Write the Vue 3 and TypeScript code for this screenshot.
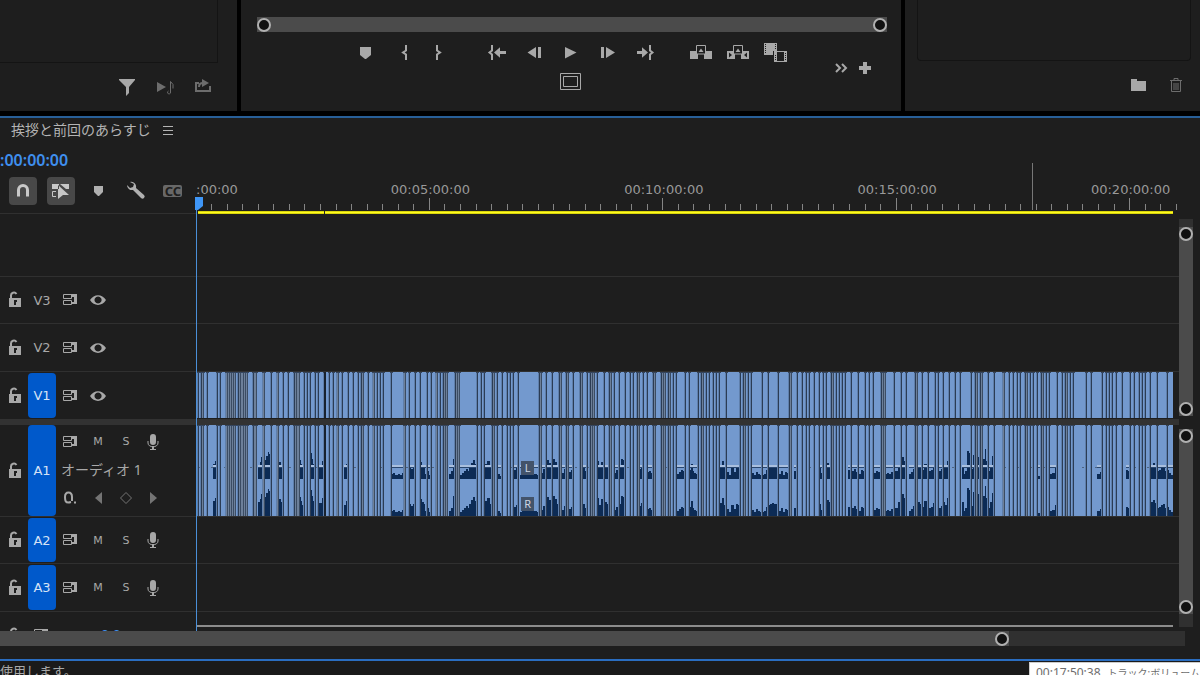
<script setup lang="ts">
import { h } from 'vue'

interface Glyph {
  w: number
  h: number
  fill?: string
  line?: string
  lw?: number
}

const glyphs: Record<string, Glyph> = {
  marker: { w: 37, h: 24, fill: 'M13 7h11v8l-5 4h-1l-5-4z' },
  markIn: { w: 37, h: 24, line: 'M22 5v5.5l-3 2l3 2V20', lw: 2 },
  markOut: { w: 37, h: 24, line: 'M16 5v5.5l3 2l-3 2V20', lw: 2 },
  goIn: { w: 37, h: 24, line: 'M14 5v5.5l-2.5 2l2.5 2V20', lw: 2, fill: 'M16 12.5l6-5.2v3.7h6v3h-6v3.7z' },
  stepBack: { w: 37, h: 24, fill: 'M12.5 12.5l8.5-5.5v11zM23 7h3v11h-3z' },
  play: { w: 37, h: 24, fill: 'M13 7l11.5 5.5L13 18.500z' },
  stepNext: { w: 37, h: 24, fill: 'M12 7h3v11h-3zM17 7l9 5.500l-9 5.500z' },
  goOut: { w: 37, h: 24, line: 'M24 5v5.500l2.500 2l-2.500 2V20', lw: 2, fill: 'M22 12.500l-6-5.200v3.700h-5v3h5v3.700z' },
  lift: { w: 37, h: 24, line: 'M13.5 12V5.500h9V14h-9z', lw: 1, fill: 'M7 11h6v3h2v5H7zM23 11h6v8h-8v-5h2zM15.500 12l2.500-3.500l2.500 3.500z' },
  extract: { w: 37, h: 24, line: 'M13.500 12V5.500h9V14h-9z', lw: 1, fill: 'M7 11h6v3h2v5H7zM9 12.500v5l3-2.500zM23 11h6v8h-8v-5h2zM27 12.500v5l-3-2.500zM15.500 12l2.500-3.500l2.500 3.500z' },
  exportFrame: { w: 37, h: 24, fill: 'M7 3h13v8h-4v4H7zM8 4v1h1V4zM8 6v1h1V6zM8 8v1h1V8zM8 10v1h1v-1zM8 12v1h1v-1zM18 4v1h1V4zM18 6v1h1V6zM18 8v1h1V8zM17 11h13v11H17zM20 12v9h7v-9zM28 13v1h1v-1zM28 15v1h1v-1zM28 17v1h1v-1zM28 19v1h1v-1zM18 15v1h1v-1zM18 17v1h1v-1zM18 19v1h1v-1z' },
  frame: { w: 24, h: 18, line: 'M1.500 .5h20v16h-20zM4.500 3.500h14v10h-14z', lw: 1 },
  more: { w: 24, h: 24, line: 'M7 8l4 4l-4 4M13 8l4 4l-4 4', lw: 2 },
  plus: { w: 24, h: 24, fill: 'M10 6h4v4h4v4h-4v4h-4v-4H6v-4h4z' },
  funnel: { w: 38, h: 26, fill: 'M11 5h16v1l-6 7v6l-3 3v-9l-7-7z' },
  playAudio: { w: 38, h: 26, fill: 'M11 8l9 5l-9 5z', line: 'M24.500 18V7.500l2.500 3v4M24.500 18a1.500 1.500 0 1 1-2-1', lw: 1 },
  share: { w: 38, h: 26, fill: 'M18 5l7 4l-7 4z', line: 'M15 9h-3v8h14v-5M15 13c0-3 1-4 4-4', lw: 2 },
  folder: { w: 38, h: 26, fill: 'M12 5h6v2h9v10H12z' },
  trash: { w: 38, h: 26, line: 'M13 6.500h12M17 6V4.500h4V6M14.500 7v10.500h9V7M17 9v7M19 9v7M21 9v7', lw: 1 },
  menu: { w: 12, h: 12, line: 'M1 2.500h10M1 6.500h10M1 10.500h10', lw: 1 },
  magnet: { w: 28, h: 28, line: 'M9.500 19.500V13a4.500 4.500 0 0 1 9 0v6.500', lw: 3 },
  linked: { w: 28, h: 28, fill: 'M5 7h7v5H5zM13 7h9v5h-3l-6-5zM11 8l11 10h-6l-5 4z', line: 'M9 14.500H5.500v5H9', lw: 1 },
  flag: { w: 28, h: 28, fill: 'M9 9h9v6l-4 4h-1l-4-4z' },
  wrench: { w: 28, h: 28, fill: 'M7 5a5 5 0 0 1 6 6l8 7a2 2 0 0 1-3 3l-8-8a5 5 0 0 1-6-5l3 3l3-1l1-3z' },
  captions: { w: 24, h: 28, fill: 'M4 8h15a2 2 0 0 1 2 2v8a2 2 0 0 1-2 2H4a2 2 0 0 1-2-2v-8a2 2 0 0 1 2-2z' },
  lock: { w: 14, h: 18, fill: 'M1 7h12v9H1zM6 9v2h0v3h2v-3h1V9z', line: 'M3 7V5a3 3 0 0 1 5.500-2', lw: 2 },
  sync: { w: 16, h: 16, line: 'M1.500 2.500h8v4h-8zM1.500 8.500h8v4h-8z', lw: 1, fill: 'M9 2h6v10H9v-2h3V5H9z' },
  eye: { w: 16, h: 12, fill: 'M0 6C4-.5 12-.5 16 6C12 12.500 4 12.500 0 6zM8 2.500a3.500 3.500 0 1 0 .1 0z' },
  mic: { w: 16, h: 18, fill: 'M7 1a3 3 0 0 1 3 3v5a3 3 0 0 1-6 0V4a3 3 0 0 1 3-3zM6 13h2v3h2v1H4v-1h2z', line: 'M2 8v2c0 5 10 5 10 0V8', lw: 1 },
  keyframe: { w: 16, h: 16, line: 'M9 12C3 14 3 10 3 7C3 1 10 1 10 7v4M12 12.500h2', lw: 2 },
  prev: { w: 16, h: 16, fill: 'M12 2v12L5 8z' },
  diamond: { w: 16, h: 16, line: 'M8 2.500L13.500 8L8 13.500L2.500 8z', lw: 1 },
  next: { w: 16, h: 16, fill: 'M4 2v12l7-6z' },
}

function Icon(props: { name: string }) {
  const g = glyphs[props.name]
  return h(
    'svg',
    { width: g.w, height: g.h, viewBox: `0 0 ${g.w} ${g.h}`, 'aria-hidden': 'true' },
    [
      g.fill ? h('path', { d: g.fill, fill: 'currentColor', 'fill-rule': 'evenodd' }) : null,
      g.line ? h('path', { d: g.line, fill: 'none', stroke: 'currentColor', 'stroke-width': g.lw }) : null,
    ],
  )
}
Icon.props = ['name']

const transport: [string, string][][] = [
  [['marker', 'マーカーを追加'], ['markIn', 'インをマーク'], ['markOut', 'アウトをマーク']],
  [['goIn', 'インへ移動'], ['stepBack', '前のフレーム'], ['play', '再生'], ['stepNext', '次のフレーム'], ['goOut', 'アウトへ移動']],
  [['lift', 'リフト'], ['extract', '抽出'], ['exportFrame', 'フレームを書き出し']],
]

const tools = [
  { icon: 'magnet', label: 'スナップ', on: true },
  { icon: 'linked', label: 'リンクされた選択', on: true },
  { icon: 'flag', label: 'マーカー', on: false },
  { icon: 'wrench', label: 'タイムライン表示設定', on: false },
]

/* Sequence canvas: SPAN units wide, clips fill the first CLIP_END units after the playhead. */
const SPAN = 983
const STEP = 233.4
const ticks = Array.from({ length: 64 }, (_, i) => ({
  x: Math.floor((i * STEP) / 15),
  major: i % 15 === 0,
}))
const labels = ['00:05:00:00', '00:10:00:00', '00:15:00:00', '00:20:00:00'].map((text, i) => ({
  text,
  left: `${(((i + 1) * STEP + 1) / SPAN) * 100}%`,
}))

const CLIP_END = 976
const cuts = [
  1, 4, 6, 10, 20, 23, 29, 30, 32, 34, 36, 38, 41, 43, 45, 46, 48, 50, 56, 58, 59, 66, 67, 74, 80, 81, 86, 91, 97, 99,
  101, 102, 107, 110, 113, 118, 121, 127, 132, 136, 140, 141, 145, 151, 156, 161, 164, 166, 171, 176, 177, 180, 183,
  186, 194, 207, 208, 212, 218, 223, 230, 234, 239, 240, 243, 246, 248, 250, 258, 260, 262, 280, 284, 287, 295, 297,
  300, 305, 310, 313, 316, 321, 342, 344, 349, 355, 362, 364, 369, 371, 376, 383, 385, 390, 393, 395, 397, 400, 407,
  412, 414, 417, 422, 428, 433, 436, 440, 442, 446, 450, 456, 458, 464, 466, 468, 471, 473, 476, 479, 488, 492, 501,
  504, 506, 509, 512, 516, 519, 522, 529, 543, 546, 548, 551, 554, 565, 571, 581, 592, 594, 600, 605, 609, 612, 617,
  622, 626, 629, 634, 636, 639, 642, 645, 648, 654, 661, 668, 672, 676, 684, 686, 688, 697, 704, 709, 718, 720, 725,
  731, 738, 741, 746, 752, 758, 763, 774, 778, 780, 783, 785, 791, 797, 806, 807, 812, 816, 820, 823, 828, 830, 833,
  836, 840, 844, 846, 849, 852, 860, 865, 868, 870, 873, 876, 889, 894, 905, 909, 912, 915, 919, 925, 933, 937, 942,
  945, 948, 953, 960, 970,
]
const cutLines = cuts.map((x, i) => ({
  x,
  tight: i > 0 && x - cuts[i - 1] <= 2,
}))

/* Each burst: start, end, peak heights spread evenly between them. */
const bursts: [number, number, number[]][] = [
  [16, 20, [15, 18]], [61, 66, [14, 17, 22]], [67, 74, [19, 23, 27, 25]], [82, 86, [17, 14]], [102, 107, [19, 15, 11]],
  [113, 118, [26, 20, 15]], [122, 127, [13, 18]], [147, 151, [11, 15]], [194, 207, [5, 6, 4, 5, 4, 6]],
  [212, 218, [12, 10, 12]], [223, 234, [17, 14, 12, 5, 8, 4]], [252, 258, [5, 8, 20]],
  [263, 280, [4, 6, 8, 10, 8, 12, 16, 19, 15]], [288, 295, [15, 18, 12]], [301, 305, [5, 3]], [316, 321, [9, 11]],
  [323, 342, [4, 6, 9, 8, 10, 6, 5, 4]], [344, 362, [6, 10, 12, 19, 16, 25, 20, 17, 12]], [364, 369, [6, 10]],
  [371, 376, [7, 9]], [385, 390, [12, 8]], [400, 412, [18, 11, 17, 13, 14, 12]], [417, 428, [6, 9, 7, 12, 20, 19]],
  [441, 446, [10, 13]], [450, 456, [7, 8, 6]], [480, 488, [5, 7, 9, 8]], [492, 501, [9, 15, 8, 6, 5]],
  [523, 529, [13, 18, 11]], [530, 543, [7, 4, 11, 7, 12, 11]], [555, 565, [6, 4, 7, 5, 4]],
  [565, 592, [4, 5, 9, 11, 12, 13, 12, 11, 5, 8, 4, 7, 6]], [597, 600, [8]], [622, 626, [12, 6]],
  [628, 634, [12, 16, 14]], [651, 668, [9, 8, 8, 10, 7, 7, 5, 9, 8]], [676, 684, [6, 8, 7]],
  [688, 709, [5, 6, 5, 7, 6, 8, 14, 12, 22, 18]], [712, 718, [5, 7, 10]], [721, 738, [14, 12, 9, 15, 18, 8, 9, 13]],
  [742, 752, [8, 10, 14, 11, 18]], [765, 778, [14, 5, 8, 28, 26, 30, 10, 24]],
  [780, 797, [22, 13, 12, 20, 30, 18, 8, 14, 23]], [841, 845, [3, 3]], [853, 860, [5, 6, 11]], [900, 905, [5, 7]],
  [929, 933, [9, 8]], [954, 976, [14, 16, 13, 8, 9, 11, 12, 8, 9, 6, 4]],
]
function wave(base: number, gain: number): string {
  return bursts
    .map(([from, to, peaks]) => {
      const step = (to - from) / peaks.length
      return `M${from} ${base}` + peaks.map((p) => `V${base - p * gain}h${step}`).join('') + `V${base}z`
    })
    .join('')
}
const leftWave = wave(54, 1)
const rightWave = wave(91, 1)
const volume = bursts.map(([a, b]) => `M${a} 0H${b}`).join('')
</script>

<template>
  <div class="app">
    <div class="upper">
      <section class="panel side">
        <div class="well left-well"></div>
        <div class="panel-tools left-tools">
          <button class="bright" aria-label="フィルター"><Icon name="funnel" /></button>
          <button aria-label="オーディオ再生"><Icon name="playAudio" /></button>
          <button aria-label="書き出し"><Icon name="share" /></button>
        </div>
      </section>

      <section class="panel monitor">
        <div class="zoombar">
          <button class="knob" aria-label="表示範囲の開始"></button>
          <button class="knob" aria-label="表示範囲の終了"></button>
        </div>
        <div class="controls">
          <div class="center-controls">
            <div class="transport">
              <div v-for="(group, i) in transport" :key="i" class="group">
                <button v-for="[icon, label] in group" :key="icon" :aria-label="label"><Icon :name="icon" /></button>
              </div>
            </div>
            <button class="frame" aria-label="セーフマージン"><Icon name="frame" /></button>
          </div>
          <div class="extra">
            <button aria-label="その他"><Icon name="more" /></button>
            <button aria-label="ボタンエディター"><Icon name="plus" /></button>
          </div>
        </div>
      </section>

      <section class="panel side">
        <div class="well right-well"></div>
        <div class="panel-tools right-tools">
          <button class="bright" aria-label="新規フォルダー"><Icon name="folder" /></button>
          <button aria-label="削除"><Icon name="trash" /></button>
        </div>
      </section>
    </div>

    <main class="timeline">
      <header class="tab">
        <span>挨拶と前回のあらすじ</span>
        <button aria-label="パネルメニュー"><Icon name="menu" /></button>
      </header>

      <div class="head">
        <div class="head-left">
          <div class="timecode">:00:00:00</div>
          <div class="tools">
            <button v-for="t in tools" :key="t.icon" :class="{ on: t.on }" :aria-label="t.label"><Icon :name="t.icon" /></button>
            <button class="cc" aria-label="キャプション"><Icon name="captions" /><b>CC</b></button>
          </div>
        </div>
        <div class="ruler">
          <span class="time first">:00:00</span>
          <span v-for="l in labels" :key="l.text" class="time" :style="{ left: l.left }">{{ l.text }}</span>
          <svg class="scale" :viewBox="`0 0 ${SPAN} 54`" preserveAspectRatio="none" shape-rendering="crispEdges">
            <rect v-for="t in ticks" :key="t.x" :x="t.x" :y="t.major ? 38 : 44" width="1" :height="t.major ? 12 : 6" fill="#858585" />
            <rect x="836" y="3" width="1" height="47" fill="#777" />
            <rect x="2" y="51" width="975" height="3" fill="#d9d50c" />
            <rect x="2" y="52" width="975" height="1" fill="#fffb20" />
            <rect x="128" y="51" width="1" height="3" fill="#222" />
          </svg>
        </div>
      </div>

      <div class="body">
        <div class="tracks">
          <div class="row blank"><div class="label"></div><div class="lane"></div></div>
          <div v-for="v in ['V3', 'V2', 'V1']" :key="v" class="row video" :class="v.toLowerCase()">
            <div class="label">
              <button class="lock" aria-label="ロック"><Icon name="lock" /></button>
              <button class="target" :class="{ active: v === 'V1' }">{{ v }}</button>
              <div class="switches">
                <button aria-label="同期ロック"><Icon name="sync" /></button>
                <button aria-label="トラック出力"><Icon name="eye" /></button>
              </div>
            </div>
            <div class="lane">
              <svg v-if="v === 'V1'" class="clips" :viewBox="`0 0 ${CLIP_END} 46`" preserveAspectRatio="none" shape-rendering="crispEdges">
                <rect :width="CLIP_END" height="46" fill="#7399ce" />
                <g v-for="c in cutLines" :key="c.x">
                  <rect :x="c.x - 1" y="0" :width="c.tight ? 1 : 2" height="46" :fill="c.tight ? '#6d809a' : '#5f7fab'" />
                  <rect :x="c.x" y="0" width="1" height="46" :fill="c.tight ? '#3b4c63' : '#2b3c54'" />
                  <rect :x="c.x - 1" y="0" width="3" height="1" fill="#35465f" />
                </g>
                <rect x="127" width="2" height="46" fill="#18222f" />
              </svg>
            </div>
          </div>

          <div class="divider"></div>

          <div class="row a1">
            <div class="label">
              <button class="lock" aria-label="ロック"><Icon name="lock" /></button>
              <button class="target active">A1</button>
              <div class="stack">
                <div class="switches">
                  <button aria-label="同期ロック"><Icon name="sync" /></button>
                  <button>M</button>
                  <button>S</button>
                  <button aria-label="ボイスオーバー録音"><Icon name="mic" /></button>
                </div>
                <div class="name">オーディオ 1</div>
                <div class="switches dim">
                  <button class="key" aria-label="キーフレームを表示"><Icon name="keyframe" /></button>
                  <button aria-label="前のキーフレーム"><Icon name="prev" /></button>
                  <button aria-label="キーフレームを追加"><Icon name="diamond" /></button>
                  <button aria-label="次のキーフレーム"><Icon name="next" /></button>
                </div>
              </div>
            </div>
            <div class="lane">
              <div class="audio">
                <svg class="clips" :viewBox="`0 0 ${CLIP_END} 91`" preserveAspectRatio="none" shape-rendering="crispEdges">
                  <rect :width="CLIP_END" height="91" fill="#7399ce" />
                  <path :d="leftWave" fill="#0c2b55" />
                  <path :d="rightWave" fill="#0c2b55" />
                  <path d="M1 42.500H975" stroke="#4d6482" stroke-width="1" stroke-dasharray="2 11" />
                  <path :d="volume" transform="translate(0 41)" stroke="#a9bfde" stroke-width="2" />
                  <path :d="volume" transform="translate(0 42.500)" stroke="#28466f" stroke-width="1" />
                  <g v-for="c in cutLines" :key="c.x">
                    <rect :x="c.x - 1" y="0" width="1" height="91" :fill="c.tight ? '#6d809a' : '#5f7fab'" />
                    <rect :x="c.x" y="0" width="1" height="91" :fill="c.tight ? '#3b4c63' : '#2b3c54'" />
                    <rect :x="c.x - 1" y="0" width="3" height="1" fill="#35465f" />
                  </g>
                  <rect x="127" width="2" height="91" fill="#18222f" />
                </svg>
                <span class="channel ch-l">L</span>
                <span class="channel ch-r">R</span>
              </div>
            </div>
          </div>

          <div v-for="a in ['A2', 'A3']" :key="a" class="row audio-row">
            <div class="label">
              <button class="lock" aria-label="ロック"><Icon name="lock" /></button>
              <button class="target active">{{ a }}</button>
              <div class="switches">
                <button aria-label="同期ロック"><Icon name="sync" /></button>
                <button>M</button>
                <button>S</button>
                <button aria-label="ボイスオーバー録音"><Icon name="mic" /></button>
              </div>
            </div>
            <div class="lane"></div>
          </div>

          <div class="row mix">
            <div class="label">
              <button class="lock" aria-label="ロック"><Icon name="lock" /></button>
              <button class="mix-sync" aria-label="同期ロック"><Icon name="sync" /></button>
              <span class="gain">0.0</span>
            </div>
            <div class="lane"><div class="end-line"></div></div>
          </div>

          <div class="playhead"><svg width="9" height="14" viewBox="0 0 9 14"><path d="M0 0h8v9l-5 4H0z" fill="#3f96f7" /></svg></div>
        </div>

        <div class="vscrolls">
          <div class="vtrack video-scroll">
            <div class="vthumb">
              <button class="knob" aria-label="ビデオ表示の上端"></button>
              <button class="knob" aria-label="ビデオ表示の下端"></button>
            </div>
          </div>
          <div class="vtrack audio-scroll">
            <div class="vthumb">
              <button class="knob" aria-label="オーディオ表示の上端"></button>
              <button class="knob" aria-label="オーディオ表示の下端"></button>
            </div>
          </div>
        </div>
      </div>

      <div class="hscroll">
        <div class="hthumb"><button class="knob" aria-label="タイムライン表示の終了"></button></div>
      </div>
    </main>

    <footer class="status">
      <span>使用します。</span>
      <div class="tooltip"><span>00:17:50:38</span><span class="kana">トラック:ボリューム</span></div>
    </footer>
  </div>
</template>

<style>
body {
  margin: 0;
  background: #000;
}
</style>

<style scoped>
.app {
  height: 100vh;
  display: flex;
  flex-direction: column;
  overflow: hidden;
  color: #a8a8a8;
  font-family: "Noto Sans", "Noto Sans CJK JP", sans-serif;
  font-size: 14px;
}
.app * {
  box-sizing: border-box;
}
button {
  display: flex;
  align-items: center;
  justify-content: center;
  padding: 0;
  border: 0;
  background: none;
  color: inherit;
  font: inherit;
}
.app :deep(svg) {
  display: block;
  flex: none;
}

.upper {
  display: grid;
  grid-template-columns: 237fr 660fr 295fr;
  gap: 4px;
  flex: none;
  margin-bottom: 5px;
}
.panel {
  background: #1e1e1e;
}
.side {
  display: flex;
  flex-direction: column;
}
.well {
  border: 1px solid #141414;
  border-top: 0;
}
.left-well {
  height: 63px;
  margin-right: 19px;
  border-left: 0;
}
.right-well {
  height: 61px;
  margin: 0 9px 0 12px;
  border-radius: 0 0 4px 4px;
}
.panel-tools {
  display: flex;
  justify-content: flex-end;
  color: #6d6d6d;
}
.left-tools {
  padding: 11px 15px 11px 0;
}
.right-tools {
  padding: 13px 5px 11px 0;
}
.bright {
  color: #a8a8a8;
}

.monitor {
  padding: 17px 0 0;
}
.zoombar {
  display: flex;
  justify-content: space-between;
  align-items: center;
  height: 15px;
  margin: 0 14px 0 16px;
  background: #4b4b4b;
}
.knob {
  width: 14px;
  height: 14px;
  flex: none;
  border: 2px solid #b0b0b0;
  border-radius: 50%;
  background: #111;
}
.controls {
  display: grid;
  grid-template-columns: 1fr 448px 1fr;
  padding-top: 8px;
}
.center-controls {
  grid-column: 2;
  display: flex;
  flex-direction: column;
  align-items: center;
  gap: 9px;
}
.transport {
  display: flex;
  gap: 20px;
  padding-right: 1px;
}
.group {
  display: flex;
}
.extra {
  display: flex;
  align-items: flex-start;
  justify-content: flex-end;
  padding: 16px 24px 0 0;
}

.timeline {
  flex: none;
  border-top: 2px solid #285f98;
  border-bottom: 2px solid #2a6dc0;
  background: #1e1e1e;
}
.tab {
  display: flex;
  align-items: center;
  gap: 11px;
  height: 24px;
  padding: 0 0 2px 11px;
  color: #b4b4b4;
}
.tab button {
  padding-top: 2px;
}
.head {
  display: grid;
  grid-template-columns: 196px minmax(0, 1fr);
  margin-right: 21px;
}
.head-left {
  border-bottom: 1px solid #303030;
}
.timecode {
  height: 35px;
  color: #3f8fee;
  font-size: 16px;
  font-weight: 600;
  line-height: 36px;
}
.tools {
  display: flex;
  gap: 10px;
  padding-left: 9px;
  color: #b0b0b0;
}
.tools button {
  width: 28px;
  height: 28px;
  border-radius: 4px;
}
.tools .on {
  background: #484848;
  color: #c8c8c8;
}
.tools .cc {
  position: relative;
  width: 24px;
  color: #686868;
}
.cc b {
  position: absolute;
  color: #1e1e1e;
  font-size: 13px;
  line-height: 14px;
}
.ruler {
  position: relative;
  height: 72px;
  padding-top: 18px;
}
.time {
  position: absolute;
  top: 40px;
  transform: translateX(-50%);
  color: #999;
  font-family: "DejaVu Sans", sans-serif;
  font-size: 13px;
  line-height: 16px;
}
.first {
  left: 0;
  transform: none;
}
.scale {
  width: 100%;
  height: 54px;
}

.body {
  display: grid;
  grid-template-columns: minmax(0, 1fr) 21px;
}
.tracks {
  position: relative;
}
.row {
  display: grid;
  grid-template-columns: 196px minmax(0, 1fr);
  border-bottom: 1px solid #303030;
}
.blank {
  height: 63px;
}
.video {
  height: 48px;
}
.v3 {
  height: 47px;
}
.v1 {
  height: 47px;
  border-bottom: 0;
}
.divider {
  height: 6px;
  background: #323232;
}
.a1 {
  height: 92px;
}
.audio-row {
  height: 48px;
}
.a1 + .audio-row {
  height: 47px;
}
.label {
  display: flex;
  align-items: center;
  padding-left: 6px;
}
.lock {
  width: 18px;
  margin-right: 4px;
}
.target {
  align-self: stretch;
  width: 28px;
  margin: 1px 0;
  border-radius: 4px;
  font-family: "DejaVu Sans", sans-serif;
  font-size: 13px;
}
.a1 .target {
  margin: 0;
}
.active {
  background: #0059cb;
  color: #d5e3f6;
}
.switches {
  display: flex;
  font-family: "DejaVu Sans", sans-serif;
  font-size: 11px;
}
.switches button {
  width: 28px;
  height: 20px;
}
.stack {
  display: flex;
  flex-direction: column;
  gap: 8px;
  padding-bottom: 2px;
}
.name {
  padding-left: 5px;
  line-height: 20px;
}
.dim {
  color: #747474;
}
.key {
  color: #a8a8a8;
}
.lane {
  padding: 0 6px 0 1px;
  overflow: hidden;
}
.clips {
  width: 100%;
  height: 46px;
}
.audio {
  position: relative;
}
.audio .clips {
  height: 91px;
}
.channel {
  position: absolute;
  left: 33%;
  width: 13px;
  height: 14px;
  margin-left: 2px;
  background: #43536a;
  color: #ccd6e4;
  font-size: 11px;
  line-height: 14px;
  text-align: center;
}
.ch-l {
  top: 36px;
}
.ch-r {
  top: 72px;
}
.mix {
  height: 19px;
  overflow: hidden;
  border-bottom: 0;
}
.mix .label {
  align-items: flex-start;
  padding-top: 15px;
}
.mix-sync {
  margin: 0 52px 0 5px;
}
.gain {
  color: #3f8fee;
  line-height: 16px;
}
.end-line {
  height: 2px;
  margin-top: 13px;
  background: #8c8c8c;
}
.playhead {
  position: absolute;
  top: -17px;
  bottom: 0;
  left: 195px;
  width: 9px;
}
.playhead::after {
  content: "";
  position: absolute;
  top: 12px;
  bottom: 0;
  left: 1px;
  width: 1px;
  background: #4a8fd8;
}
.vscrolls {
  display: flex;
  flex-direction: column;
  gap: 13px;
  padding-top: 5px;
}
.vtrack {
  width: 14px;
  background: #303030;
}
.video-scroll {
  height: 197px;
  padding: 8px 0 0;
}
.audio-scroll {
  height: 198px;
}
.vthumb {
  display: flex;
  flex-direction: column;
  justify-content: space-between;
  background: #4b4b4b;
}
.video-scroll .vthumb {
  height: 189px;
}
.audio-scroll .vthumb {
  height: 185px;
}
.hscroll {
  display: grid;
  grid-template-columns: 1009fr 176fr;
  height: 15px;
  margin: 0 15px 13px 0;
  background: #303030;
}
.hthumb {
  display: flex;
  align-items: center;
  justify-content: flex-end;
  height: 15px;
  background: #4b4b4b;
}

.status {
  position: relative;
  flex: 1;
  min-height: 0;
  background: #1a1a1a;
  font-size: 13px;
  line-height: 20px;
}
.tooltip {
  position: absolute;
  top: 1px;
  right: 0;
  display: flex;
  gap: 7px;
  width: 171px;
  overflow: hidden;
  padding-left: 6px;
  border: 1px solid #ccc;
  border-right: 0;
  background: #fff;
  color: #6d6d6d;
  font-size: 12px;
  white-space: nowrap;
}
.kana {
  font-size: 10px;
}
</style>
